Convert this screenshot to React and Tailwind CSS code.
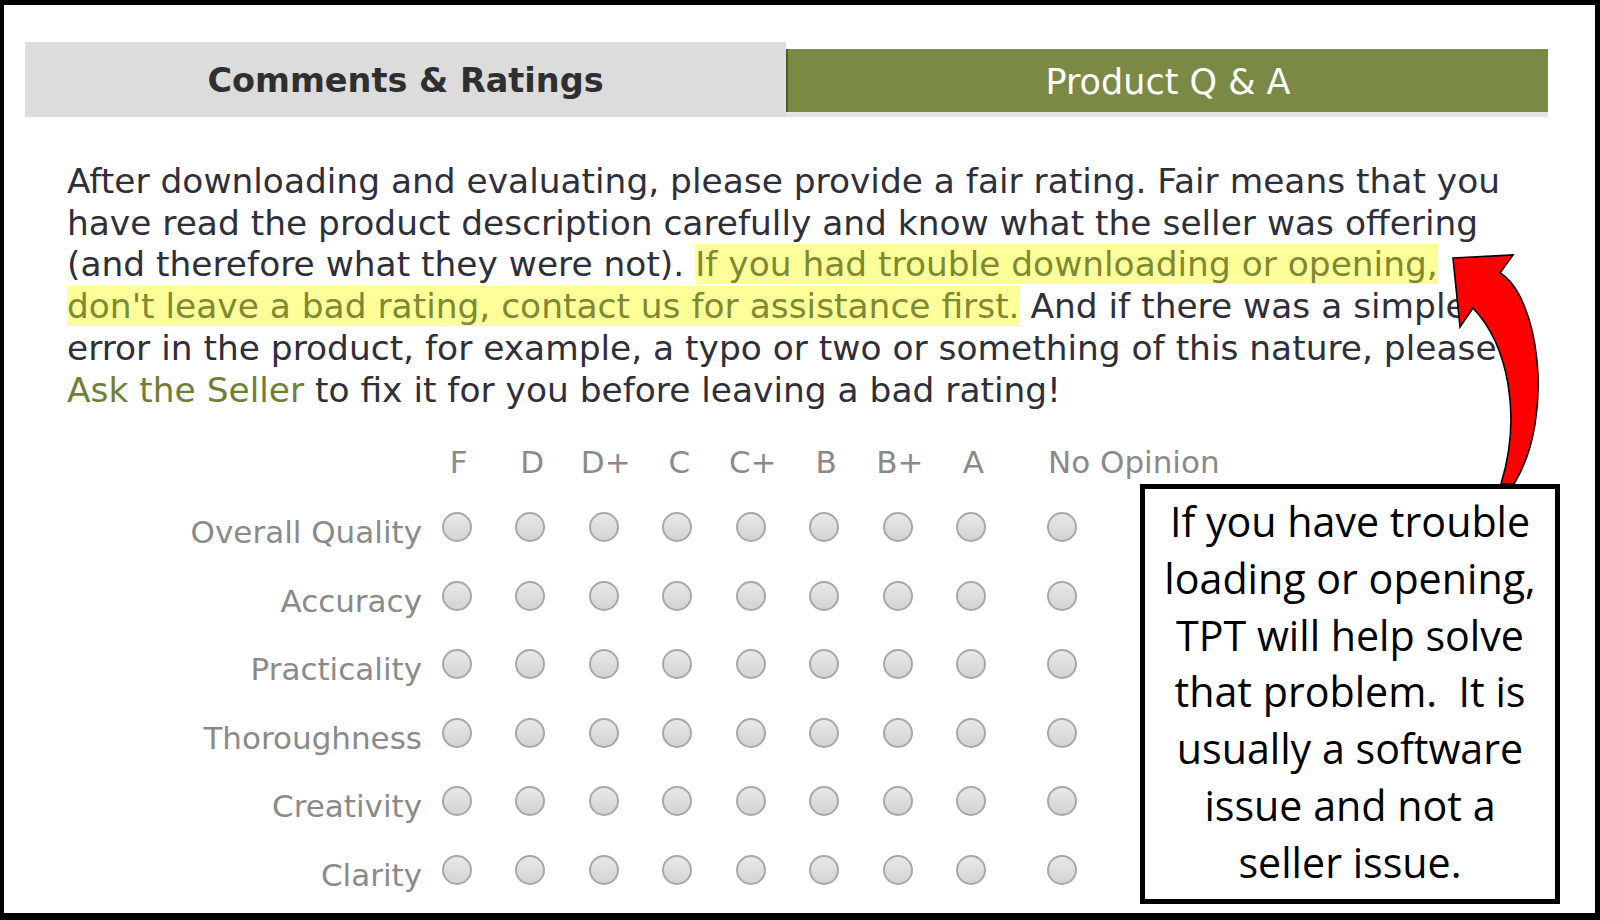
import React from "react";

const rows = ["Overall Quality", "Accuracy", "Practicality", "Thoroughness", "Creativity", "Clarity"];
const grades = ["F", "D", "D+", "C", "C+", "B", "B+", "A"];

function Radio() {
  return (
    <span className="block w-[30px] h-[30px] rounded-full border-2 border-[#a8a8a8] bg-linear-to-b from-[#e8e8e8] to-[#d3d3d3]" />
  );
}

export default function App() {
  return (
    <div className="relative w-[1600px] h-[920px] box-border bg-white border-black border-t-[5px] border-l-[4px] border-r-[5px] border-b-[7px] overflow-hidden">
      <div className="font-['DejaVu_Sans',sans-serif]">
        {/* Tabs */}
        <div className="ml-[21px] mt-[37px] flex items-end w-[1523px]">
          <div className="w-[761px] h-[75px] pt-[3px] bg-[#dcdcdc] flex items-center justify-center text-[33.5px] font-bold text-[#2f2f2f]">
            Comments &amp; Ratings
          </div>
          <div className="w-[762px] flex flex-col">
            <div className="h-[63px] pt-[3px] bg-[#7a8a45] border-l-2 border-[#4b5a2a] flex items-center justify-center text-[35px] text-white">
              Product Q &amp; A
            </div>
            <div className="h-[5px] bg-[#e4e4e4]" />
          </div>
        </div>

        {/* Paragraph */}
        <p className="ml-[63px] mt-[44px] text-[34.4px] leading-[41.7px] text-[#2f2f3c] whitespace-nowrap">
          After downloading and evaluating, please provide a fair rating. Fair means that you
          <br />
          have read the product description carefully and know what the seller was offering
          <br />
          (and therefore what they were not).{" "}
          <span className="bg-[#ffff99] text-[#7d8a34]">If you had trouble downloading or opening,</span>
          <br />
          <span className="bg-[#ffff99] text-[#7d8a34]">don't leave a bad rating, contact us for assistance first.</span>{" "}
          And if there was a simple
          <br />
          error in the product, for example, a typo or two or something of this nature, please
          <br />
          <span className="text-[#6f7f35]">Ask the Seller</span> to fix it for you before leaving a bad rating!
        </p>

        {/* Ratings grid */}
        <div className="mt-[31px] text-[31px] text-[#8a8a8a]">
          <div className="flex h-[40px] items-center mb-[11px]">
            <div className="w-[418px]" />
            {grades.map((g) => (
              <div key={g} className="w-[73.5px] text-center">{g}</div>
            ))}
            <div className="ml-[38px] whitespace-nowrap">No Opinion</div>
          </div>
          {rows.map((r) => (
            <div key={r} className="flex h-[68.5px] items-center">
              <div className="w-[416px] text-right pr-[0px] pt-[10px] whitespace-nowrap">
                <span className="relative left-[2px]">{r}</span>
              </div>
              {grades.map((g) => (
                <div key={g} className="w-[73.5px] flex justify-center">
                  <Radio />
                </div>
              ))}
              <div className="ml-[39px]">
                <Radio />
              </div>
            </div>
          ))}
        </div>
      </div>

      {/* Red curved arrow annotation */}
      <svg
        className="absolute left-[1436px] top-[240px]"
        width="120"
        height="250"
        viewBox="0 0 120 250"
      >
        <path
          d="M13,13 L73,10 L60,28 C98,50 116,170 74,239 L61,239 C82,170 68,100 33,63 L20,82 Z"
          fill="#ff0000"
          stroke="#000"
          strokeWidth="1.6"
          strokeLinejoin="miter"
        />
      </svg>

      {/* Callout box */}
      <div className="absolute left-[1136px] top-[479px] w-[420px] h-[420px] box-border border-[5px] border-black bg-white pt-[4px] text-center text-black text-[41.2px] leading-[56.8px] font-['Open_Sans',sans-serif]">
        If you have trouble
        <br />
        loading or opening,
        <br />
        TPT will help solve
        <br />
        that problem.&nbsp; It is
        <br />
        usually a software
        <br />
        issue and not a
        <br />
        seller issue.
      </div>
    </div>
  );
}
